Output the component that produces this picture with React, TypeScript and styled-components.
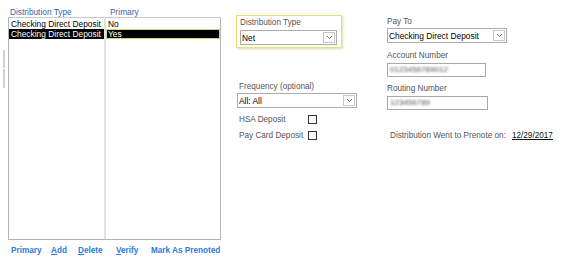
import styled, { createGlobalStyle } from "styled-components";

const Global = createGlobalStyle`
  html, body { margin: 0; padding: 0; background: #fff; }
  body { font-family: "Liberation Sans", Arial, sans-serif; }
`;

const Page = styled.div`
  display: flex;
  width: 562px;
  height: 261px;
  overflow: hidden;
  background: #fff;
  font-size: 8.5px;
  color: #111;
`;

const Rail = styled.div`
  width: 8px;
  padding-top: 50px;
  display: flex;
  justify-content: center;
`;

const Grip = styled.div`
  width: 2px;
  height: 38px;
  background: linear-gradient(#d2d2d2 0 18px, #fff 18px 19px, #d2d2d2 19px);
  margin-left: -1px;
`;

const LeftPanel = styled.div`
  width: 213px;
  display: flex;
  flex-direction: column;
  padding-top: 6px;
`;

const HeaderRow = styled.div`
  display: grid;
  grid-template-columns: 100px 1fr;
  height: 11px;
  align-items: center;
  color: #3563a8;
  font-size: 8.3px;
  padding-left: 2px;
`;

const Table = styled.div`
  height: 223px;
  box-sizing: border-box;
  border: 1px solid #b4b4b4;
  border-top-color: #c8c8c8;
  display: grid;
  grid-template-columns: 97px 1fr;
  grid-template-rows: 11px 10px 1fr;
`;

const Cell = styled.div<{ $sel?: boolean; $focus?: boolean; $last?: boolean }>`
  display: flex;
  align-items: center;
  padding-left: 2px;
  white-space: nowrap;
  font-size: 8.4px;
  color: ${(p) => (p.$sel ? "#fff" : "#000")};
  background: ${(p) => (p.$sel ? "#000" : "#fff")};
  border-right: ${(p) => (p.$last ? "none" : "2px solid #e2e2e2")};
  box-shadow: ${(p) => (p.$focus ? "inset 0 0 0 1px #d8d27a" : "none")};
`;

const Filler = styled.div<{ $last?: boolean }>`
  border-right: ${(p) => (p.$last ? "none" : "2px solid #e2e2e2")};
`;

const Links = styled.div`
  display: flex;
  padding: 6px 0 0 3px;
  font-weight: bold;
  font-size: 8.2px;
  color: #2a7be0;
  white-space: nowrap;
`;

const LinkItem = styled.span<{ $w: number }>`
  width: ${(p) => p.$w}px;
  u { text-decoration: underline; }
`;

const MidCol = styled.div`
  margin-left: 15px;
  width: 136px;
  display: flex;
  flex-direction: column;
  padding-top: 15px;
`;

const FocusBox = styled.div`
  width: 106px;
  height: 33px;
  border: 1px solid #e6df7c;
  box-shadow: 1px 1px 2px rgba(200, 190, 80, 0.5);
  padding: 2px 0 0 3px;
  box-sizing: border-box;
`;

const Label = styled.div<{ $mt?: number; $ml?: number }>`
  color: #555;
  font-size: 8.2px;
  height: 10px;
  line-height: 10px;
  margin-top: ${(p) => p.$mt ?? 0}px;
  margin-left: ${(p) => p.$ml ?? 0}px;
  white-space: nowrap;
`;

const Select = styled.div<{ $w: number; $mt?: number; $ml?: number }>`
  width: ${(p) => p.$w}px;
  height: 15px;
  box-sizing: border-box;
  border: 1px solid #adadad;
  display: flex;
  align-items: center;
  margin-top: ${(p) => p.$mt ?? 1}px;
  margin-left: ${(p) => p.$ml ?? 0}px;
  background: #fff;
  font-size: 8.4px;
  color: #000;
`;

const SelectText = styled.span`
  flex: 1;
  padding-left: 1px;
  white-space: nowrap;
`;

const Arrow = styled.span`
  width: 12px;
  height: 11px;
  margin-right: 1px;
  box-sizing: border-box;
  border: 1px solid #c8c8c8;
  display: flex;
  align-items: center;
  justify-content: center;
`;

const CheckRow = styled.div<{ $mt: number }>`
  display: flex;
  align-items: center;
  margin-top: ${(p) => p.$mt}px;
  margin-left: 3px;
  height: 12px;
`;

const CheckLabel = styled.span`
  width: 69px;
  color: #555;
  font-size: 8.2px;
`;

const Box = styled.span`
  width: 9px;
  height: 9px;
  box-sizing: border-box;
  border: 1px solid #333;
  background: #fff;
`;

const RightCol = styled.div`
  margin-left: 15px;
  display: flex;
  flex-direction: column;
  padding-top: 17px;
`;

const Input = styled.div<{ $w: number }>`
  width: ${(p) => p.$w}px;
  height: 14px;
  box-sizing: border-box;
  border: 1px solid #a8a8a8;
  margin-top: 2px;
  display: flex;
  align-items: center;
  overflow: hidden;
`;

const Blur = styled.span<{ $w: number }>`
  width: ${(p) => p.$w}px;
  height: 8px;
  margin-left: 2px;
  font-size: 8px;
  line-height: 8px;
  color: #555;
  filter: blur(1px);
  white-space: nowrap;
  overflow: hidden;
`;

const PrenoteRow = styled.div`
  display: flex;
  margin-top: 21px;
  padding-left: 3px;
  font-size: 8.2px;
  color: #555;
`;

const DateLink = styled.span`
  margin-left: 6px;
  color: #111;
  text-decoration: underline;
`;

function Chevron() {
  return (
    <svg width="7" height="5" viewBox="0 0 7 5">
      <path d="M1 1 L3.5 3.5 L6 1" fill="none" stroke="#555" strokeWidth="0.9" />
    </svg>
  );
}

export default function App() {
  return (
    <>
      <Global />
      <Page>
        <Rail>
          <Grip />
        </Rail>
        <LeftPanel>
          <HeaderRow>
            <span>Distribution Type</span>
            <span>Primary</span>
          </HeaderRow>
          <Table>
            <Cell>Checking Direct Deposit</Cell>
            <Cell $last>No</Cell>
            <Cell $sel>Checking Direct Deposit</Cell>
            <Cell $sel $focus $last>Yes</Cell>
            <Filler />
            <Filler $last />
          </Table>
          <Links>
            <LinkItem $w={40}>Primary</LinkItem>
            <LinkItem $w={27}><u>A</u>dd</LinkItem>
            <LinkItem $w={38}><u>D</u>elete</LinkItem>
            <LinkItem $w={35}><u>V</u>erify</LinkItem>
            <LinkItem $w={70}>Mark As Prenoted</LinkItem>
          </Links>
        </LeftPanel>

        <MidCol>
          <FocusBox>
            <Label>Distribution Type</Label>
            <Select $w={97} $mt={2}>
              <SelectText>Net</SelectText>
              <Arrow><Chevron /></Arrow>
            </Select>
          </FocusBox>
          <Label $mt={34} $ml={3}>Frequency (optional)</Label>
          <Select $w={120} $mt={1} $ml={1}>
            <SelectText>All: All</SelectText>
            <Arrow><Chevron /></Arrow>
          </Select>
          <CheckRow $mt={5}>
            <CheckLabel>HSA Deposit</CheckLabel>
            <Box />
          </CheckRow>
          <CheckRow $mt={4}>
            <CheckLabel>Pay Card Deposit</CheckLabel>
            <Box />
          </CheckRow>
        </MidCol>

        <RightCol>
          <Label>Pay To</Label>
          <Select $w={120} $mt={1}>
            <SelectText>Checking Direct Deposit</SelectText>
            <Arrow><Chevron /></Arrow>
          </Select>
          <Label $mt={8}>Account Number</Label>
          <Input $w={99}>
            <Blur $w={66}>0123456789012</Blur>
          </Input>
          <Label $mt={7}>Routing Number</Label>
          <Input $w={101}>
            <Blur $w={60}>123456789</Blur>
          </Input>
          <PrenoteRow>
            <span>Distribution Went to Prenote on:</span>
            <DateLink>12/29/2017</DateLink>
          </PrenoteRow>
        </RightCol>
      </Page>
    </>
  );
}
